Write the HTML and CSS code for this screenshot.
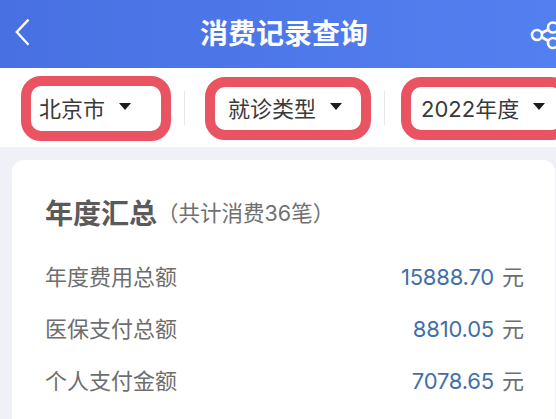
FILE: index.html
```html
<!DOCTYPE html>
<html lang="zh-CN">
<head>
<meta charset="utf-8">
<title>消费记录查询</title>
<link rel="stylesheet" href="styles.css">
</head>
<body>
<div class="page">
  <header class="header">
    <svg class="back" width="16" height="30" viewBox="0 0 16 30"><path d="M13.500 2.700 L1.800 15 L13.500 27.700" fill="none" stroke="#fff" stroke-width="2.400"/></svg>
    <h1 class="title">消费记录查询</h1>
    <svg class="share" width="30" height="34" viewBox="0 0 30 34"><g fill="none" stroke="#fff" stroke-width="2.600"><circle cx="7" cy="17" r="5"/><circle cx="23" cy="9.500" r="5"/><circle cx="23" cy="25" r="5"/><path d="M11.500 15 L18.500 11.500 M11.500 19 L18.500 23"/></g></svg>
  </header>
  <nav class="filters">
    <div class="filter filter-a"><span>北京市</span><i class="caret"></i></div>
    <div class="divider divider-a"></div>
    <div class="filter filter-b"><span>就诊类型</span><i class="caret"></i></div>
    <div class="divider divider-b"></div>
    <div class="filter filter-c"><span>2022年度</span><i class="caret"></i></div>
  </nav>
  <main class="card">
    <div class="card-head"><h2 class="card-title">年度汇总</h2><span class="card-sub">（共计消费36笔）</span></div>
    <div class="row"><span class="label">年度费用总额</span><span class="value">15888.70<em class="unit">元</em></span></div>
    <div class="row"><span class="label">医保支付总额</span><span class="value">8810.05<em class="unit">元</em></span></div>
    <div class="row"><span class="label">个人支付金额</span><span class="value">7078.65<em class="unit">元</em></span></div>
  </main>
</div>
</body>
</html>
```
FILE: styles.css
```css
* { box-sizing: border-box; margin: 0; padding: 0; }
html, body { width: 556px; height: 419px; overflow: hidden; }
body { background: #eff1f6; font-family: Inter, "Noto Sans CJK SC", sans-serif; }
.page { width: 556px; height: 419px; overflow: hidden; }
.header {
  height: 68px;
  background: linear-gradient(90deg, #4870e2, #5380f0);
  display: flex; align-items: center;
  padding: 0 0 4px 15px;
}
.back { flex: none; }
.title {
  flex: 1;
  font: 700 28px/40px "Noto Sans CJK SC", sans-serif;
  color: #fff;
  margin-left: 169px;
}
.share { flex: none; margin-right: -4px; margin-top: 6px; }
.filters {
  height: 79px;
  background: #fff;
  display: flex; align-items: center;
  padding-left: 21px;
  overflow: hidden;
}
.filter {
  flex: none;
  height: 63px;
  border: 10px solid #ea5362;
  border-radius: 20px;
  display: flex; align-items: center;
  font-size: 22px;
  line-height: 30px;
  color: #3a3a3a;
  margin-top: 2px;
  white-space: nowrap;
}
.filter-a { width: 150px; height: 65px; padding-left: 8px; }
.filter-b { width: 166px; margin-left: 20px; padding-left: 13px; }
.filter-c { width: 170px; margin-left: 16px; padding-left: 10px; }
.caret {
  width: 0; height: 0;
  margin-left: 14px;
  margin-top: -4px;
  border-left: 6.500px solid transparent;
  border-right: 6.500px solid transparent;
  border-top: 7px solid #1c1c1c;
}
.divider { flex: none; width: 1px; height: 34px; background: #e8e9ed; }
.divider-a { margin-left: 13px; }
.divider-b { margin-left: 13px; }
.card {
  width: 543px; height: 260px;
  margin: 13px 0 0 12px;
  background: #fff;
  border-radius: 12px 12px 0 0;
  padding: 30px 31px 0 33px;
}
.card-head { display: flex; align-items: center; height: 44px; margin-bottom: 15px; }
.card-title { font: 700 28px/44px "Noto Sans CJK SC", sans-serif; color: #5a5a5a; }
.card-sub { font: 400 21.500px/44px Inter, "Noto Sans CJK SC", sans-serif; color: #707070; margin-top: 2px; }
.row { display: flex; justify-content: space-between; align-items: center; height: 52px; font-size: 22px; }
.label { color: #6e6e6e; font-family: "Noto Sans CJK SC", sans-serif; }
.value { color: #3f70a8; letter-spacing: -0.2px; }
.unit { font-style: normal; color: #6e6e6e; margin-left: 8px; letter-spacing: 0; font-family: "Noto Sans CJK SC", sans-serif; }
```
